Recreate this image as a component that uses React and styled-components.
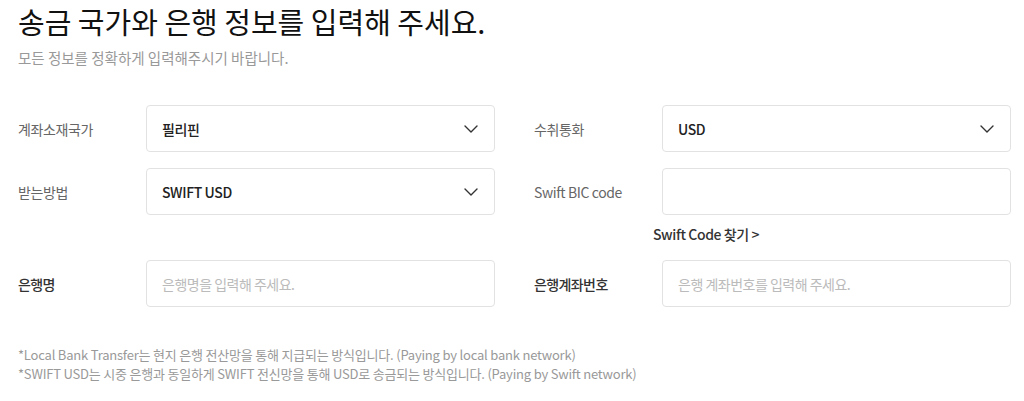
import React from 'react';
import styled, { createGlobalStyle } from 'styled-components';

const GlobalStyle = createGlobalStyle`
  body {
    margin: 0;
    background: #fff;
    font-family: 'Noto Sans CJK KR', 'Noto Sans', sans-serif;
  }
`;

const Page = styled.div`
  padding: 3px 13px 0 18px;
  width: 1024px;
  box-sizing: border-box;
`;

const Title = styled.h1`
  margin: 0;
  font-size: 29px;
  line-height: 36px;
  font-weight: 400;
  color: #111;
`;

const Sub = styled.p`
  margin: 9px 0 0;
  font-size: 14.5px;
  line-height: 20px;
  color: #999;
`;

const Form = styled.div`
  margin-top: 37px;
  display: grid;
  grid-template-columns: 1fr 1fr;
  column-gap: 39px;
  row-gap: 16px;
  align-items: start;
`;

const Field = styled.div`
  display: flex;
  align-items: flex-start;
`;

const Label = styled.label`
  width: 128px;
  flex-shrink: 0;
  height: 47px;
  display: flex;
  align-items: center;
  font-size: 14px;
  letter-spacing: ${p => (p.dark ? '-0.6px' : '-0.4px')};
  font-weight: ${p => (p.dark ? 500 : 400)};
  color: ${p => (p.dark ? '#333' : '#666')};
`;

const Control = styled.div`
  flex: 1;
  display: flex;
  flex-direction: column;
`;

const Box = styled.div`
  height: 47px;
  box-sizing: border-box;
  border: 1px solid #e2e2e2;
  border-radius: 4px;
  padding: 0 16px 0 15px;
  display: flex;
  align-items: center;
  justify-content: space-between;
  font-size: 14px;
  letter-spacing: -0.4px;
  font-weight: 500;
  color: #222;
`;

const Placeholder = styled.span`
  font-weight: 400;
  color: #bbb;
  letter-spacing: -0.5px;
`;

const HelpLink = styled.a`
  margin: 9px 0 0 -9px;
  line-height: 20px;
  font-size: 14px;
  font-weight: 500;
  letter-spacing: -0.4px;
  color: #333;
  text-decoration: none;
`;

const Notes = styled.div`
  margin-top: 38px;
  font-size: 13px;
  line-height: 19px;
  letter-spacing: -0.2px;
  color: #999;
`;

const Chevron = () => (
  <svg width="14" height="8" viewBox="0 0 14 8" fill="none">
    <path d="M1 1l6 6 6-6" stroke="#333" strokeWidth="1.4" strokeLinecap="round" strokeLinejoin="round" />
  </svg>
);

const Select = ({ value }) => (
  <Box>
    <span>{value}</span>
    <Chevron />
  </Box>
);

const App = () => (
  <Page>
    <GlobalStyle />
    <Title>송금 국가와 은행 정보를 입력해 주세요.</Title>
    <Sub>모든 정보를 정확하게 입력해주시기 바랍니다.</Sub>
    <Form>
      <Field>
        <Label>계좌소재국가</Label>
        <Control>
          <Select value="필리핀" />
        </Control>
      </Field>
      <Field>
        <Label>수취통화</Label>
        <Control>
          <Select value="USD" />
        </Control>
      </Field>
      <Field>
        <Label>받는방법</Label>
        <Control>
          <Select value="SWIFT USD" />
        </Control>
      </Field>
      <Field>
        <Label>Swift BIC code</Label>
        <Control>
          <Box />
          <HelpLink>Swift Code 찾기 &gt;</HelpLink>
        </Control>
      </Field>
      <Field>
        <Label dark>은행명</Label>
        <Control>
          <Box>
            <Placeholder>은행명을 입력해 주세요.</Placeholder>
          </Box>
        </Control>
      </Field>
      <Field>
        <Label dark>은행계좌번호</Label>
        <Control>
          <Box>
            <Placeholder>은행 계좌번호를 입력해 주세요.</Placeholder>
          </Box>
        </Control>
      </Field>
    </Form>
    <Notes>
      <div>*Local Bank Transfer는 현지 은행 전산망을 통해 지급되는 방식입니다. (Paying by local bank network)</div>
      <div>*SWIFT USD는 시중 은행과 동일하게 SWIFT 전신망을 통해 USD로 송금되는 방식입니다. (Paying by Swift network)</div>
    </Notes>
  </Page>
);

export default App;
